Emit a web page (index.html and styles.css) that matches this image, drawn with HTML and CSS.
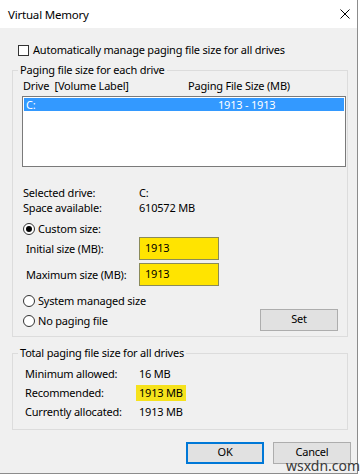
FILE: index.html
```html
<!DOCTYPE html>
<html lang="en">
<head>
    <meta charset="UTF-8">
    <meta name="viewport" content="width=device-width, initial-scale=1.0">
    <title>Virtual Memory</title>
    <link rel="stylesheet" href="styles.css">
</head>
<body>
    <div class="window">
        <!-- Title bar -->
        <div class="titlebar">
            <span class="title">Virtual Memory</span>
            <svg class="close" viewBox="0 0 10 10" width="10" height="10">
                <path d="M0.5 0.5 L9.5 9.5 M9.5 0.5 L0.5 9.5" stroke="#000" stroke-width="1" fill="none"/>
            </svg>
        </div>

        <div class="content">
            <div class="check-row">
                <span class="checkbox"></span>
                <span>Automatically manage paging file size for all drives</span>
            </div>

            <!-- Paging file per drive -->
            <fieldset class="group group-drives">
                <legend>Paging file size for each drive</legend>
                <div class="list-header">
                    <span class="col-drive">Drive&nbsp; [Volume Label]</span>
                    <span class="col-size">Paging File Size (MB)</span>
                </div>
                <div class="listbox">
                    <div class="list-item selected">
                        <span class="col-drive">C:</span>
                        <span class="col-value">1913 - 1913</span>
                    </div>
                </div>

                <div class="info-row first">
                    <span class="info-label">Selected drive:</span>
                    <span>C:</span>
                </div>
                <div class="info-row">
                    <span class="info-label">Space available:</span>
                    <span>610572 MB</span>
                </div>

                <div class="radio-row custom">
                    <span class="radio checked"></span>
                    <span>Custom size:</span>
                </div>
                <div class="field-row">
                    <span class="field-label">Initial size (MB):</span>
                    <span class="field">1913</span>
                </div>
                <div class="field-row">
                    <span class="field-label">Maximum size (MB):</span>
                    <span class="field">1913</span>
                </div>

                <div class="bottom-options">
                    <div class="radios">
                        <div class="radio-row">
                            <span class="radio"></span>
                            <span>System managed size</span>
                        </div>
                        <div class="radio-row">
                            <span class="radio"></span>
                            <span>No paging file</span>
                        </div>
                    </div>
                    <button class="btn btn-set">Set</button>
                </div>
            </fieldset>

            <!-- Totals -->
            <fieldset class="group group-total">
                <legend>Total paging file size for all drives</legend>
                <div class="total-row">
                    <span class="total-label">Minimum allowed:</span>
                    <span class="total-value">16 MB</span>
                </div>
                <div class="total-row">
                    <span class="total-label">Recommended:</span>
                    <span class="total-value highlight">1913 MB</span>
                </div>
                <div class="total-row">
                    <span class="total-label">Currently allocated:</span>
                    <span class="total-value">1913 MB</span>
                </div>
            </fieldset>

            <div class="actions">
                <button class="btn btn-default">OK</button>
                <button class="btn">Cancel</button>
            </div>
        </div>
    </div>
    <div class="watermark">wsxdn.com</div>
</body>
</html>
```

FILE: styles.css
```css
/* Virtual Memory dialog */

* {
    box-sizing: border-box;
    margin: 0;
    padding: 0;
}

body {
    font-family: 'Noto Sans', 'Open Sans', sans-serif;
    font-size: 11px;
    letter-spacing: -0.2px;
    color: #000;
    background-color: #fff;
    width: 360px;
    height: 475px;
    overflow: hidden;
    position: relative;
}

.window {
    width: 358px;
    height: 474px;
    background-color: #f0f0f0;
    border-right: 1px solid #8c8c8c;
    border-bottom: 1px solid #8c8c8c;
}

/* Title bar */
.titlebar {
    height: 28px;
    background-color: #fff;
    display: flex;
    align-items: center;
    justify-content: space-between;
    padding: 0 7px 0 8px;
}

.title {
    font-size: 11.5px;
}

.close {
    width: 10px;
    height: 10px;
}

.content {
    padding: 16px 9px 0 12px;
}

/* Checkbox */
.check-row {
    display: flex;
    align-items: center;
    height: 12px;
    line-height: 12px;
}

.checkbox {
    width: 11px;
    height: 11px;
    border: 1px solid #333;
    background-color: #fff;
    margin: 0 4px 0 6px;
}

/* Group boxes */
.group {
    border: 1px solid #dcdcdc;
    padding: 0 9px 5px 10px;
}

.group legend {
    margin-left: -5px;
    padding: 0 2px;
    line-height: 14px;
}

.group-drives {
    margin-top: 7px;
}

.list-header {
    display: flex;
    height: 14px;
    line-height: 14px;
    margin-top: 2px;
}

.col-drive {
    width: 165px;
}

.listbox {
    margin: 3px -8px 0 -1px;
    height: 71px;
    border: 1px solid #7a7a7a;
    background-color: #fff;
    padding: 1px;
}

.list-item {
    display: flex;
    height: 13px;
    line-height: 13px;
}

.list-item.selected {
    background-color: #3399ff;
    color: #fff;
}

.list-item .col-drive {
    width: 194px;
    padding-left: 2px;
}

.info-row {
    display: flex;
    height: 15px;
    line-height: 15px;
}

.info-row.first {
    margin-top: 18px;
}

.info-label {
    width: 116px;
}

/* Radios */
.radio-row {
    display: flex;
    align-items: center;
    height: 14px;
    line-height: 14px;
}

.radio-row.custom {
    margin-top: 7px;
}

.radio {
    width: 12px;
    height: 12px;
    border: 1px solid #333;
    border-radius: 50%;
    background-color: #fff;
    margin-right: 3px;
    display: flex;
    align-items: center;
    justify-content: center;
}

.radio.checked::after {
    content: '';
    width: 6px;
    height: 6px;
    border-radius: 50%;
    background-color: #000;
}

/* Size fields */
.field-row {
    display: flex;
    align-items: center;
    margin-top: 1px;
    margin-bottom: 3px;
}

.field-label {
    width: 116px;
    padding-left: 3px;
}

.field {
    width: 80px;
    height: 23px;
    line-height: 19px;
    padding-left: 5px;
    border: 1px solid #8a8a5a;
    background-color: #ffe400;
}

.bottom-options {
    display: flex;
    justify-content: space-between;
    margin-top: 8px;
}

.radios {
    display: flex;
    flex-direction: column;
    gap: 6px;
}

/* Buttons */
.btn {
    font-family: inherit;
    font-size: 11px;
    line-height: 12px;
    letter-spacing: inherit;
    color: #000;
    background-color: #e1e1e1;
    border: 1px solid #adadad;
    height: 22px;
    width: 78px;
    padding-bottom: 2px;
}

.btn-set {
    margin-top: 15px;
}

.btn-default {
    border-color: #0078d7;
    box-shadow: inset 0 0 0 1px #0078d7;
}

/* Totals */
.group-total {
    margin-top: 9px;
    padding-top: 4px;
    padding-bottom: 8px;
}

.total-row {
    display: flex;
    align-items: center;
    height: 19px;
}

.total-label {
    width: 113px;
    padding-left: 2px;
}

.total-value {
    padding: 0 3px;
    line-height: 16px;
}

.highlight {
    background-color: #f6e21c;
}

.actions {
    display: flex;
    justify-content: flex-end;
    gap: 9px;
    margin-top: 12px;
    margin-right: -3px;
}

/* Watermark over the bottom edge */
.watermark {
    position: absolute;
    left: 286px;
    top: 459px;
    font-size: 14px;
    line-height: 14px;
    letter-spacing: 0;
    color: #3a3a3a;
}
```
